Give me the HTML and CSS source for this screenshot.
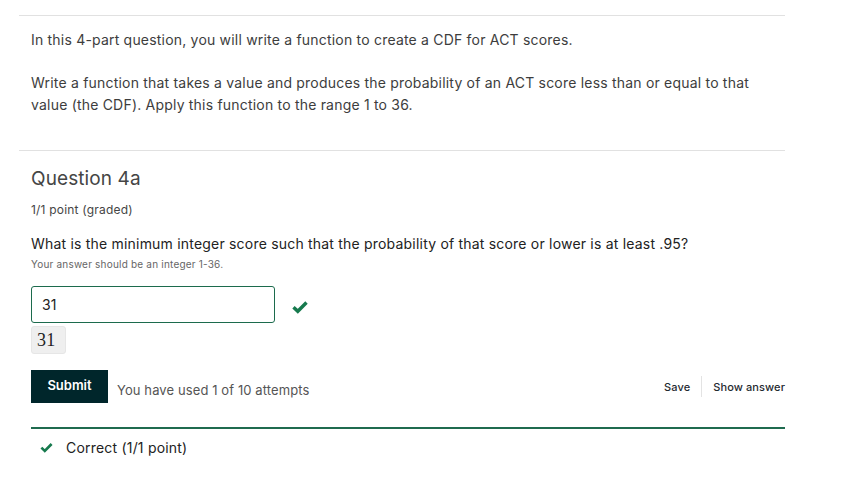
FILE: index.html
```html
<!DOCTYPE html>
<html>
<head>
<meta charset="utf-8">
<link rel="stylesheet" href="styles.css">
</head>
<body>
<div class="page">
  <hr class="rule rule-top">
  <div class="intro">
    <p>In this 4-part question, you will write a function to create a CDF for ACT scores.</p>
    <p>Write a function that takes a value and produces the probability of an ACT score less than or equal to that value (the CDF). Apply this function to the range 1 to 36.</p>
  </div>
  <hr class="rule">
  <div class="problem">
    <h3 class="title">Question 4a</h3>
    <div class="points">1/1 point (graded)</div>
    <div class="question">What is the minimum integer score such that the probability of that score or lower is at least .95?</div>
    <div class="hint">Your answer should be an integer 1-36.</div>
    <div class="answer-row">
      <div class="input">31</div>
      <svg class="check" width="16" height="14" viewBox="0 0 16 14"><path d="M1.5 7.2 L5.8 11.3 L14.5 2.5" fill="none" stroke="#177a4e" stroke-width="3.4"/></svg>
    </div>
    <div class="preview">31</div>
    <div class="actions">
      <button class="submit">Submit</button>
      <span class="attempts">You have used 1 of 10 attempts</span>
      <div class="links">
        <span class="link">Save</span>
        <span class="sep"></span>
        <span class="link">Show answer</span>
      </div>
    </div>
    <div class="status">
      <svg class="check small" width="13" height="11" viewBox="0 0 16 14"><path d="M1.5 7.2 L5.8 11.3 L14.5 2.5" fill="none" stroke="#177a4e" stroke-width="3.4"/></svg>
      <span>Correct (1/1 point)</span>
    </div>
  </div>
</div>
</body>
</html>
```
FILE: styles.css
```css
* { box-sizing: border-box; }
body {
  margin: 0;
  background: #fff;
  font-family: Inter, "Noto Sans", sans-serif;
  color: #333;
  letter-spacing: 0.2px;
}
.page {
  width: 766px;
  margin-left: 19px;
  padding-top: 15px;
}
.rule {
  border: 0;
  border-top: 1px solid #e1e1e1;
  margin: 0;
}
.intro {
  padding: 13px 12px 34px;
  font-size: 14px;
  line-height: 22px;
  color: #3d3d3d;
}
.intro p { margin: 0 0 21px; }
.intro p:last-child { margin-bottom: 0; }
.problem {
  padding: 15px 0 0 12px;
}
.title {
  margin: 0;
  font-size: 19px;
  font-weight: 400;
  line-height: 26px;
  color: #454545;
  letter-spacing: 0.1px;
}
.points {
  margin-top: 10px;
  font-size: 12px;
  line-height: 16px;
  color: #454545;
}
.question {
  margin-top: 16px;
  font-size: 14px;
  line-height: 20px;
  color: #222;
}
.hint {
  margin-top: 3px;
  font-size: 10px;
  line-height: 14px;
  color: #666;
}
.answer-row {
  display: flex;
  align-items: center;
  margin-top: 15px;
}
.input {
  width: 244px;
  height: 37px;
  border: 1px solid #1c6b4d;
  border-radius: 3px;
  padding: 0 10px;
  font-size: 14px;
  line-height: 35px;
  color: #222;
}
.check { margin-left: 17px; margin-top: 4px; }
.preview {
  margin-top: 3px;
  width: 35px;
  height: 28px;
  background: #efefef;
  border: 1px solid #e6e6e6;
  border-radius: 3px;
  font-family: "Liberation Serif", "DejaVu Serif", serif;
  font-size: 18px;
  line-height: 26px;
  padding-left: 5px;
  color: #222;
}
.actions {
  display: flex;
  align-items: center;
  margin-top: 16px;
}
.submit {
  width: 77px;
  height: 33px;
  border: 0;
  background: #00262b;
  color: #fff;
  font-family: Inter, "Noto Sans", sans-serif;
  font-size: 13px;
  font-weight: 600;
  padding: 0 0 3px;
}
.attempts {
  margin-left: 9px;
  margin-top: 6px;
  font-size: 13px;
  color: #555;
  letter-spacing: 0.1px;
}
.links {
  margin-left: auto;
  display: flex;
  align-items: center;
  font-size: 11px;
  font-weight: 500;
  color: #1f2a30;
  letter-spacing: 0.1px;
}
.sep {
  width: 1px;
  height: 21px;
  background: #e3e3e3;
  margin: 0 11px 0 11px;
}
.status {
  margin-top: 24px;
  border-top: 2px solid #1f6b4f;
  display: flex;
  align-items: center;
  padding: 10px 0 0 9px;
  font-size: 14px;
  color: #222;
}
.check.small { margin: 0 13px 0 0; }
```
